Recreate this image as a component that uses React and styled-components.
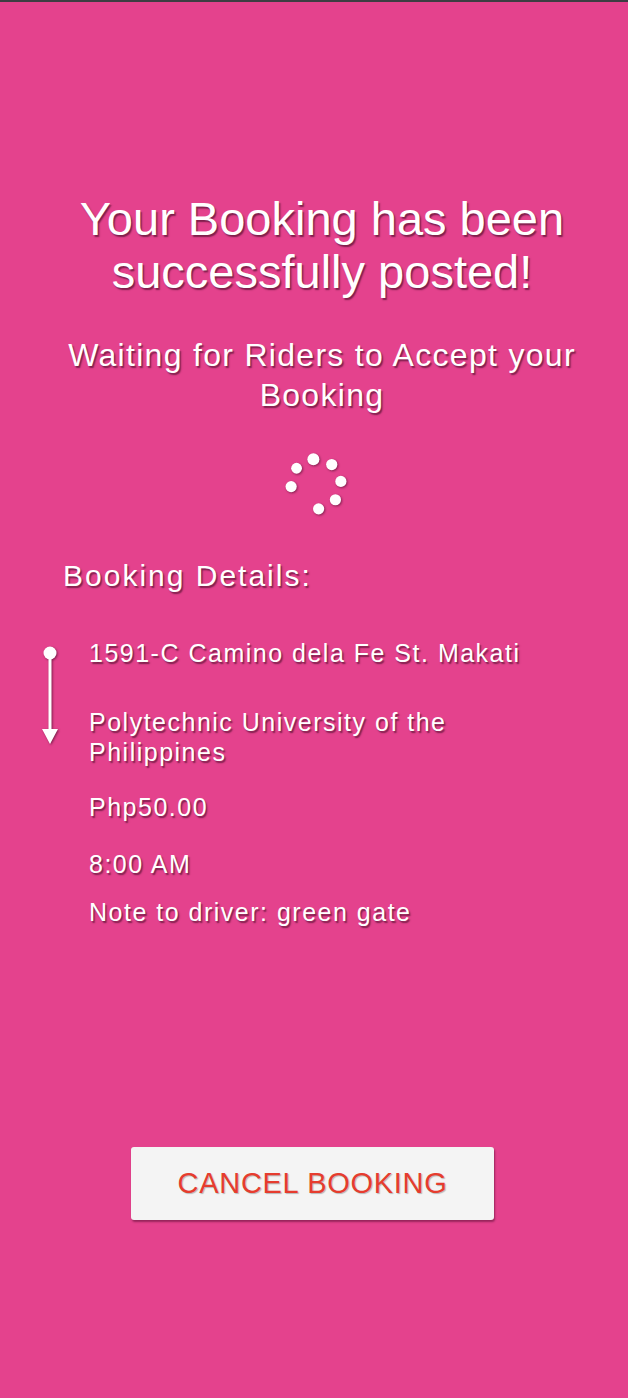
import React from "react";
import styled, { createGlobalStyle } from "styled-components";

const GlobalStyle = createGlobalStyle`
  * {
    box-sizing: border-box;
  }
  body {
    margin: 0;
    font-family: "Liberation Sans", Arial, sans-serif;
    background: #e4428d;
  }
`;

const shadow = "1.5px 1.5px 1.5px rgba(40, 0, 20, 0.55)";

const Screen = styled.div`
  min-height: 100vh;
  border-top: 2px solid #3d3d42;
  background: #e4428d;
  color: #fff;
  display: flex;
  flex-direction: column;
  padding: 190px 0 178px;
`;

const Title = styled.h1`
  margin: 0;
  padding: 0 30px 0 46px;
  text-align: center;
  font-size: 47px;
  line-height: 53px;
  font-weight: 400;
  text-shadow: ${shadow};
`;

const Subtitle = styled.p`
  margin: 37px 0 0;
  padding: 0 40px 0 56px;
  text-align: center;
  font-size: 32px;
  line-height: 40px;
  letter-spacing: 1.3px;
  text-shadow: ${shadow};
`;

const SpinnerBox = styled.div`
  display: flex;
  justify-content: center;
  margin-top: 36px;
  padding-left: 4px;

  svg {
    filter: drop-shadow(1.5px 1.5px 1px rgba(40, 0, 20, 0.5));
  }
`;

const Details = styled.section`
  margin-top: 42px;
  padding: 0 40px;
`;

const Heading = styled.h2`
  margin: 0;
  padding-left: 23px;
  font-size: 30px;
  line-height: 34px;
  font-weight: 400;
  letter-spacing: 2px;
  text-shadow: ${shadow};
`;

const RouteRow = styled.div`
  display: grid;
  grid-template-columns: 20px 1fr;
  column-gap: 29px;
  margin-top: 45px;

  svg {
    margin-top: 7px;
    filter: drop-shadow(1.5px 1.5px 1px rgba(40, 0, 20, 0.55));
  }
`;

const Stops = styled.div`
  display: flex;
  flex-direction: column;
  gap: 39px;
`;

const Line = styled.div`
  font-size: 25px;
  line-height: 30px;
  letter-spacing: 1.5px;
  text-shadow: ${shadow};
  margin: ${(p) => p.$gap || 0}px 0 0 ${(p) => (p.$indent ? 49 : 0)}px;
`;

const Footer = styled.div`
  margin-top: auto;
  display: flex;
  justify-content: center;
  padding-right: 3px;
`;

const CancelButton = styled.button`
  width: 363px;
  height: 73px;
  border: none;
  border-radius: 3px;
  background: #f4f4f4;
  box-shadow: 1px 2px 2px rgba(60, 0, 30, 0.45);
  color: #e63c2e;
  font-family: "Liberation Sans", Arial, sans-serif;
  font-size: 29px;
  letter-spacing: 0.7px;
  text-shadow: 1px 1px 1px rgba(0, 0, 0, 0.25);
  cursor: pointer;
`;

const dots = [
  { a: -96, r: 6 },
  { a: -51, r: 5.6 },
  { a: -6, r: 5.6 },
  { a: 39, r: 5.6 },
  { a: 84, r: 5.6 },
  { a: 174, r: 5.6 },
  { a: 219, r: 5.4 },
];

const Spinner = () => (
  <svg width="66" height="66" viewBox="0 0 66 66">
    {dots.map((d) => {
      const rad = (d.a * Math.PI) / 180;
      return (
        <circle
          key={d.a}
          cx={33 + 25 * Math.cos(rad)}
          cy={33 + 25 * Math.sin(rad)}
          r={d.r}
          fill="#fff"
        />
      );
    })}
  </svg>
);

const RouteArrow = () => (
  <svg width="20" height="104" viewBox="0 0 20 104">
    <circle cx="10" cy="8" r="6.5" fill="#fff" />
    <line x1="10" y1="8" x2="10" y2="88" stroke="#fff" strokeWidth="3" />
    <polygon points="2,84 18,84 10,99" fill="#fff" />
  </svg>
);

const booking = {
  pickup: "1591-C Camino dela Fe St. Makati",
  dropoff: "Polytechnic University of the Philippines",
  fare: "Php50.00",
  time: "8:00 AM",
  note: "green gate",
};

const App = () => {
  return (
    <>
      <GlobalStyle />
      <Screen>
        <Title>Your Booking has been successfully posted!</Title>
        <Subtitle>Waiting for Riders to Accept your Booking</Subtitle>
        <SpinnerBox>
          <Spinner />
        </SpinnerBox>
        <Details>
          <Heading>Booking Details:</Heading>
          <RouteRow>
            <RouteArrow />
            <Stops>
              <Line>{booking.pickup}</Line>
              <Line>{booking.dropoff}</Line>
            </Stops>
          </RouteRow>
          <Line $indent $gap={25}>
            {booking.fare}
          </Line>
          <Line $indent $gap={27}>
            {booking.time}
          </Line>
          <Line $indent $gap={18}>
            Note to driver: {booking.note}
          </Line>
        </Details>
        <Footer>
          <CancelButton>CANCEL BOOKING</CancelButton>
        </Footer>
      </Screen>
    </>
  );
};

export default App;
